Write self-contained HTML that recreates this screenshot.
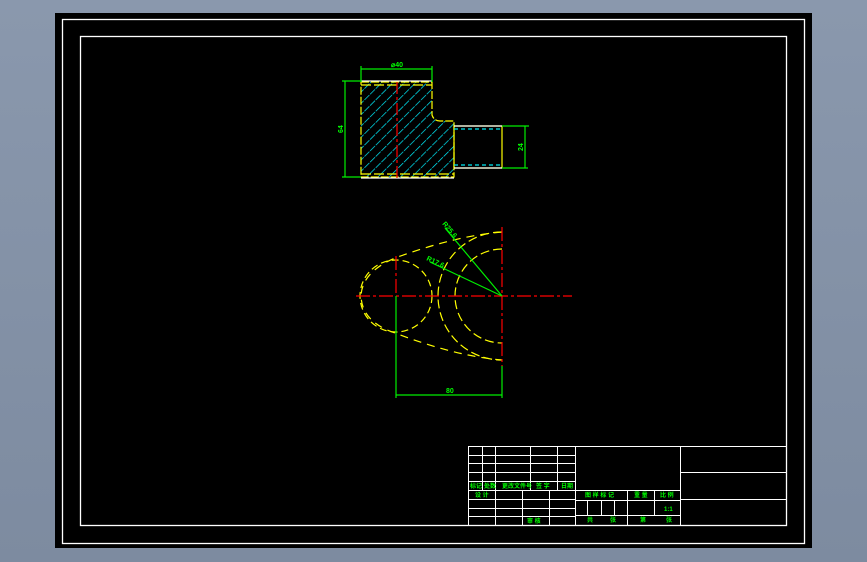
<!DOCTYPE html>
<html><head><meta charset="utf-8"><style>
html,body{margin:0;padding:0;width:867px;height:562px;overflow:hidden;background:linear-gradient(#8a98ad,#7d8ba0);}
svg{position:absolute;left:0;top:0}
text{font-family:"Liberation Sans","Noto Sans CJK SC",sans-serif;fill:#00ff00;font-weight:bold}
</style></head><body>
<svg width="867" height="562" viewBox="0 0 867 562">
<defs>
<clipPath id="hc"><path d="M361 82 H432 V115 Q434 121 440 121 H454 V177 H361 Z"/></clipPath>
<pattern id="hp" width="8" height="8" patternUnits="userSpaceOnUse" patternTransform="rotate(45)"><line x1="0" y1="0" x2="0" y2="8" stroke="#00f0ff" stroke-width="1.4" stroke-dasharray="5 1"/></pattern>
</defs>
<rect x="55" y="13" width="757" height="535" fill="#000"/>
<rect x="62.5" y="19.5" width="742" height="524" fill="none" stroke="#fff" stroke-width="1.3"/>
<rect x="80.5" y="36.5" width="706" height="489" fill="none" stroke="#fff" stroke-width="1.3"/>

<!-- top view -->
<rect x="361" y="82" width="95" height="96" fill="url(#hp)" clip-path="url(#hc)"/>
<g fill="none" stroke-width="1.2">
<path d="M361 82 H432 V115 Q434 121 440 121 H454 V177 H361 Z" stroke="#ffff00" stroke-dasharray="8 2"/>
<line x1="361" y1="81" x2="432" y2="81" stroke="#fff"/>
<line x1="361" y1="178" x2="454" y2="178" stroke="#fff"/>
<line x1="361" y1="85" x2="432" y2="85" stroke="#ffff00" stroke-dasharray="10 3"/>
<line x1="361" y1="174" x2="454" y2="174" stroke="#ffff00" stroke-dasharray="10 3"/>
<rect x="454" y="126" width="48" height="42" stroke="#ffff00"/>
<line x1="454" y1="126" x2="502" y2="126" stroke="#fff"/>
<line x1="454" y1="168" x2="502" y2="168" stroke="#fff"/>
<line x1="454" y1="129" x2="502" y2="129" stroke="#00e8f0" stroke-dasharray="4 3"/>
<line x1="454" y1="165" x2="502" y2="165" stroke="#00e8f0" stroke-dasharray="4 3"/>
<line x1="397" y1="82" x2="397" y2="178" stroke="#ff0000" stroke-dasharray="12 3 3 3"/>
<g stroke="#00ee00">
<line x1="361" y1="69" x2="432" y2="69"/><line x1="361" y1="66" x2="361" y2="82"/><line x1="432" y1="66" x2="432" y2="82"/>
<line x1="345" y1="81" x2="345" y2="177"/><line x1="342" y1="81" x2="361" y2="81"/><line x1="342" y1="177" x2="361" y2="177"/>
<line x1="525" y1="126" x2="525" y2="168"/><line x1="502" y1="126" x2="529" y2="126"/><line x1="502" y1="168" x2="528" y2="168"/>
</g>
</g>
<text x="391" y="67" font-size="7">⌀40</text>
<text x="0" y="0" font-size="7" transform="translate(343,133) rotate(-90)">64</text>
<text x="0" y="0" font-size="7" transform="translate(523,151) rotate(-90)">24</text>

<!-- lower view -->
<g fill="none" stroke-width="1.2">
<circle cx="396" cy="296" r="36" stroke="#ffff00" stroke-dasharray="7 4"/>
<path d="M502 232 A64 64 0 0 0 502 360" stroke="#ffff00" stroke-dasharray="9 4"/>
<path d="M502 249 A47 47 0 0 0 502 343" stroke="#ffff00" stroke-dasharray="9 4"/>
<path d="M502 232 Q455 236 395 258 Q362 272 361 296 Q362 322 395 333 Q455 356 502 360" stroke="#ffff00" stroke-dasharray="8 6"/>
<line x1="356" y1="296" x2="572" y2="296" stroke="#ff0000" stroke-dasharray="14 3 3 3"/>
<line x1="502" y1="227" x2="502" y2="366" stroke="#ff0000" stroke-dasharray="14 3 3 3"/>
<line x1="396" y1="256" x2="396" y2="296" stroke="#ff0000" stroke-dasharray="14 3 3 3"/>
<g stroke="#00ee00">
<line x1="396" y1="296" x2="396" y2="398"/><line x1="502" y1="366" x2="502" y2="398"/>
<line x1="396" y1="395" x2="502" y2="395"/>
<line x1="502" y1="296" x2="445" y2="228"/><line x1="502" y1="296" x2="430" y2="262"/>
</g>
</g>
<text x="0" y="0" font-size="7" transform="translate(442,224) rotate(50)">R25.6</text>
<text x="0" y="0" font-size="7" transform="translate(426,260) rotate(25)">R17.6</text>
<text x="446" y="393" font-size="7">80</text>

<!-- title block -->
<g stroke="#fff" stroke-width="1" fill="none">
<rect x="468.5" y="446.5" width="318" height="79"/>
<line x1="575.5" y1="446" x2="575.5" y2="525"/>
<line x1="680.5" y1="446" x2="680.5" y2="525"/>
<line x1="680" y1="472.5" x2="786" y2="472.5"/>
<line x1="680" y1="499.5" x2="786" y2="499.5"/>
<path d="M468 455.5H575M468 463.5H575M468 472.5H575M468 481.5H575M468 490.5H680M468 499.5H575M468 508.5H575M468 516.5H575M575 500.5H680M575 515.5H680"/>
<path d="M482.5 446V490M495.5 446V525M530.5 446V490M557.5 446V490M522.5 490V525M549.5 490V525"/>
<path d="M587.5 500V515M601.5 500V515M614.5 500V515M627.5 490V525M654.5 490V515"/>
</g>
<g font-size="6">
<text x="470" y="488">标记</text><text x="484" y="488">处数</text><text x="502" y="488">更改文件号</text><text x="536" y="488">签 字</text><text x="561" y="488">日期</text>
<text x="475" y="497">设 计</text>
<text x="527" y="523">审 核</text>
<text x="585" y="497">图 样 标 记</text><text x="634" y="497">重 量</text><text x="660" y="497">比 例</text>
<text x="664" y="511">1:1</text>
<text x="587" y="522">共</text><text x="610" y="522">张</text><text x="640" y="522">第</text><text x="666" y="522">张</text>
</g>
</svg>
</body></html>
